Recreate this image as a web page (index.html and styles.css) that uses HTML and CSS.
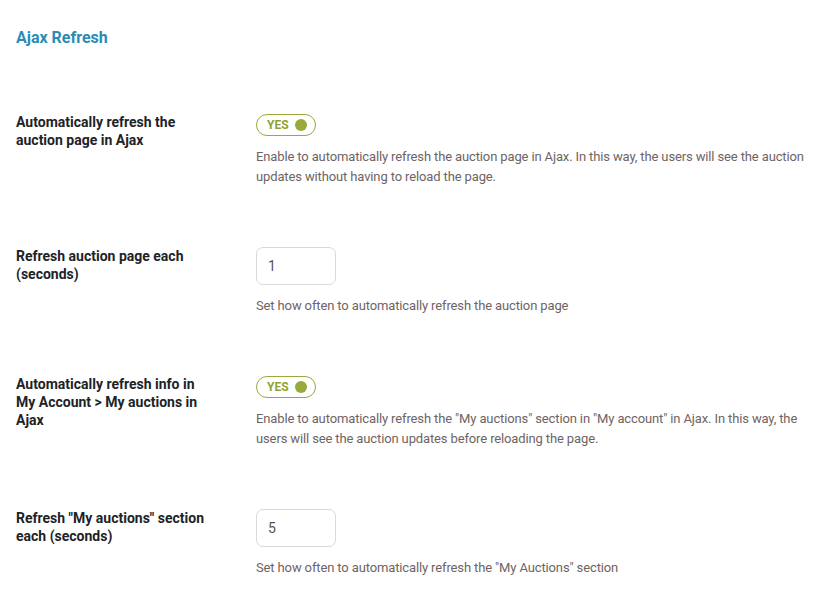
FILE: index.html
```html
<!DOCTYPE html>
<html lang="en">
<head>
  <meta charset="UTF-8" />
  <meta name="viewport" content="width=device-width, initial-scale=1" />
  <title>Ajax Refresh</title>
  <link rel="stylesheet" href="styles.css">
</head>
<body>
  <div class="panel">
    <h2 class="panel-title">Ajax Refresh</h2>

    <div class="option">
      <div class="option-label">Automatically refresh the auction page in Ajax</div>
      <div class="option-field">
        <span class="toggle"><span class="toggle-text">YES</span><span class="toggle-knob"></span></span>
        <p class="option-desc">Enable to automatically refresh the auction page in Ajax. In this way, the users will see the auction updates without having to reload the page.</p>
      </div>
    </div>

    <div class="option">
      <div class="option-label">Refresh auction page each (seconds)</div>
      <div class="option-field">
        <input class="number-input" type="text" value="1" />
        <p class="option-desc">Set how often to automatically refresh the auction page</p>
      </div>
    </div>

    <div class="option">
      <div class="option-label">Automatically refresh info in My Account &gt; My auctions in Ajax</div>
      <div class="option-field">
        <span class="toggle"><span class="toggle-text">YES</span><span class="toggle-knob"></span></span>
        <p class="option-desc">Enable to automatically refresh the "My auctions" section in "My account" in Ajax. In this way, the users will see the auction updates before reloading the page.</p>
      </div>
    </div>

    <div class="option">
      <div class="option-label">Refresh "My auctions" section each (seconds)</div>
      <div class="option-field">
        <input class="number-input" type="text" value="5" />
        <p class="option-desc">Set how often to automatically refresh the "My Auctions" section</p>
      </div>
    </div>
  </div>
</body>
</html>
```

FILE: styles.css
```css
body {
  font-family: Roboto, "Liberation Sans", Arial, sans-serif;
  background: #fff;
  color: #1d2327;
  margin: 0;
  padding: 0;
}
.panel {
  padding: 28px 16px 0;
}
.panel-title {
  margin: 0 0 35px;
  font-size: 16px;
  line-height: 20px;
  font-weight: bold;
  color: #2a8bb6;
}
.option {
  display: grid;
  grid-template-columns: 200px 1fr;
  column-gap: 40px;
  padding: 30px 0 29.5px;
}
.option-label {
  font-size: 14px;
  line-height: 18px;
  font-weight: bold;
  color: #1d2327;
}
.option-field {
  display: flex;
  flex-direction: column;
  align-items: flex-start;
}
.toggle {
  display: inline-flex;
  align-items: center;
  justify-content: space-between;
  box-sizing: border-box;
  width: 60px;
  height: 22px;
  margin-top: 1px;
  padding: 0 8px 0 10px;
  border: 1px solid #97aa3b;
  border-radius: 11px;
}
.toggle-text {
  font-size: 12px;
  font-weight: bold;
  color: #8ea332;
}
.toggle-knob {
  width: 12px;
  height: 12px;
  border-radius: 50%;
  background: #97aa3b;
}
.number-input {
  box-sizing: border-box;
  width: 80px;
  height: 38px;
  padding: 0 11px;
  border: 1px solid #d9d9d9;
  border-radius: 7px;
  font-family: inherit;
  font-size: 14px;
  color: #555;
  outline: none;
}
.option-desc {
  margin: 11px 0 0;
  font-size: 13px;
  line-height: 20px;
  letter-spacing: -0.13px;
  color: #6e6464;
}
```
